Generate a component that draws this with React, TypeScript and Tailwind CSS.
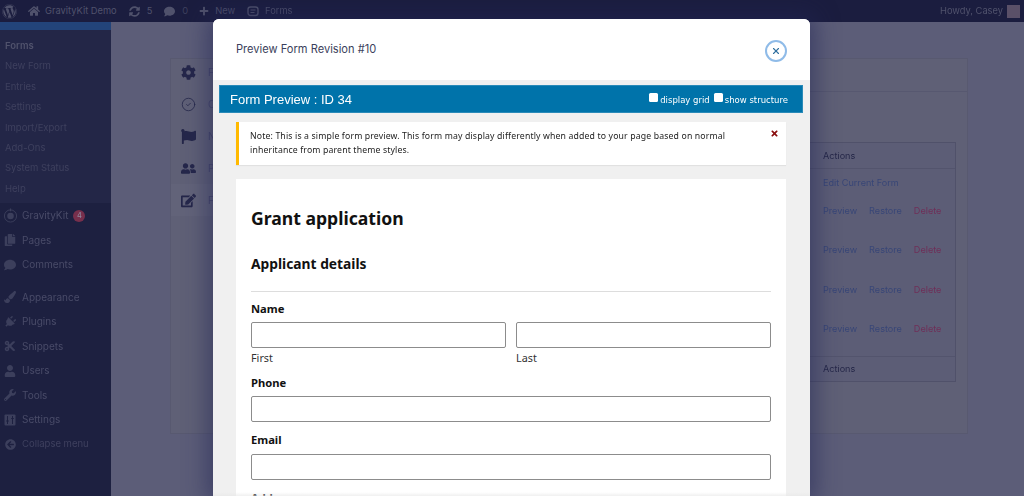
import { FaWordpress, FaHome, FaSyncAlt, FaComment, FaPlus, FaCog, FaFlag, FaUserFriends, FaUser, FaWrench, FaPlug, FaPaintBrush, FaCopy, FaCut, FaArrowCircleLeft, FaEdit, FaTimes } from "react-icons/fa"
import { CircleCheck, X } from "lucide-react"

const subMenu = ["New Form", "Entries", "Settings", "Import/Export", "Add-Ons", "System Status", "Help"]

function GravityIcon({ className }: { className?: string }) {
    return (
        <svg viewBox="0 0 16 16" width="15" height="15" fill="none" stroke="currentColor" className={className}>
            <circle cx="8" cy="8.5" r="6.5" strokeWidth="1" />
            <circle cx="8" cy="8.5" r="3.5" fill="currentColor" stroke="none" />
            <path d="M8 0.5v3" strokeWidth="1.2" />
        </svg>
    )
}

function SettingsIcon({ className }: { className?: string }) {
    return (
        <svg viewBox="0 0 12 12" width="12" height="12" className={className}>
            <rect width="11" height="11" x="0.5" y="0.5" rx="1" fill="currentColor" />
            <path d="M3.5 2v8M2.2 7h2.6M8.5 2v8M7.2 4.5h2.6" stroke="#1d2040" strokeWidth="1" />
        </svg>
    )
}

function FormsIcon({ className }: { className?: string }) {
    return (
        <svg viewBox="0 0 12 12" width="12" height="12" fill="none" stroke="currentColor" className={className}>
            <rect x="1" y="2" width="10" height="8.5" rx="2.5" strokeWidth="1.4" />
            <path d="M3.5 5h5M3.5 7.5h4" strokeWidth="1" />
        </svg>
    )
}

function PlugIcon() {
    return <FaPlug className="rotate-45" />
}

const lowerMenu = [
    { label: "Appearance", icon: FaPaintBrush },
    { label: "Plugins", icon: PlugIcon },
    { label: "Snippets", icon: FaCut },
    { label: "Users", icon: FaUser },
    { label: "Tools", icon: FaWrench },
    { label: "Settings", icon: SettingsIcon },
]

// only the first letter of each tab shows beside the modal
const navItems = [
    { label: "F", icon: FaCog },
    { label: "C", icon: CircleCheck },
    { label: "N", icon: FaFlag },
    { label: "P", icon: FaUserFriends },
    { label: "F", icon: FaEdit },
]

function MenuRow({ label, icon: Icon, badge }: { label: string; icon: any; badge?: string }) {
    return (
        <div className="flex h-[24.5px] items-center pl-[1px]">
            <span className="flex w-[21px] justify-center pr-[3px] text-[12px] text-[#3c3f5c]"><Icon /></span>
            <span className="text-[10px] text-[#494b68]">{label}</span>
            {badge && (
                <span className="ml-[5px] flex h-[12px] w-[12px] items-center justify-center rounded-full bg-[#772f4c] text-[7.5px] text-[#8f8aa0]">
                    {badge}
                </span>
            )}
        </div>
    )
}

function Sidebar() {
    return (
        <aside className="flex w-[111px] shrink-0 flex-col bg-[#1d2040]">
            <div className="h-[8px] bg-[#23447a]" />
            <div className="flex flex-col bg-[#232647] pb-[4px] pl-[5px] pt-[6px]">
                <div className="flex h-[20.4px] items-center text-[9.5px] font-semibold text-[#50526c]">Forms</div>
                {subMenu.map((item) => (
                    <div key={item} className="flex h-[20.4px] items-center text-[9.5px] text-[#3e405e]">{item}</div>
                ))}
            </div>
            <div className="mt-[0.5px]">
                <MenuRow label="GravityKit" icon={GravityIcon} badge="4" />
                <MenuRow label="Pages" icon={FaCopy} />
                <MenuRow label="Comments" icon={FaComment} />
            </div>
            <div className="mt-[8px]">
                {lowerMenu.map((m) => (
                    <MenuRow key={m.label} label={m.label} icon={m.icon} />
                ))}
            </div>
            <div className="flex h-[24px] items-center pl-[1px]">
                <span className="flex w-[21px] justify-center pr-[3px]"><FaArrowCircleLeft className="text-[11px] text-[#3c3f5c]" /></span>
                <span className="text-[9.5px] text-[#3e405e]">Collapse menu</span>
            </div>
        </aside>
    )
}

function TopBar() {
    return (
        <header className="flex h-[22px] shrink-0 items-center justify-between bg-[#1b1d3f] pl-[2px] pr-[4px] text-[9.3px] text-[#50526c]">
            <div className="flex items-center">
                <FaWordpress className="text-[15px]" />
                <FaHome className="ml-[11px] text-[12px]" />
                <span className="ml-[5px]">GravityKit Demo</span>
                <FaSyncAlt className="ml-[12px] text-[11px]" />
                <span className="ml-[7px]">5</span>
                <FaComment className="ml-[12px] text-[11px]" />
                <span className="ml-[7px] text-[#3e405e]">0</span>
                <FaPlus className="ml-[11px] text-[10px]" />
                <span className="ml-[6px]">New</span>
                <FormsIcon className="ml-[12px]" />
                <span className="ml-[6px]">Forms</span>
            </div>
            <div className="flex items-center gap-[4px]">
                <span>Howdy, Casey</span>
                <span className="h-[13px] w-[13px] bg-[#5a5068]" />
            </div>
        </header>
    )
}

function RevisionRow() {
    return (
        <div className="flex h-[39.5px] items-center gap-[12px] pl-[10px] text-[#384677]">
            <span>Preview</span>
            <span>Restore</span>
            <span className="text-[#6f2f58]">Delete</span>
        </div>
    )
}

function Background() {
    return (
        <main className="flex-1 bg-[#5c5d78] pl-[59px] pt-[36px]">
            <div className="flex h-[376px] w-[798px] border border-[#585970] bg-[#5f6076]">
                <nav className="-mt-[2px] flex w-[43px] shrink-0 flex-col">
                    {navItems.map(({ label, icon: Icon }, i) => (
                        <div key={i} className={`flex h-[31.8px] shrink-0 items-center gap-[12px] pl-[10px] text-[10px] text-[#47486a] ${i === 4 ? "bg-[#626379]" : ""}`}>
                            <span className="flex w-[15px] shrink-0 justify-center text-[14px] text-[#25274a]"><Icon size={15} strokeWidth={1.3} /></span>
                            <span>{label}</span>
                        </div>
                    ))}
                </nav>
                <div className="flex-1">
                    <div className="h-[33px] border-b border-[#575870]" />
                    <div className="pl-[100px] pr-[11px] pt-[50px]">
                        <div className="flex h-[240px] flex-col border border-[#50516a] bg-[#5c5d76] text-[9.1px]">
                            <div className="flex h-[26px] shrink-0 items-center border-b border-[#53546d] pl-[508px] text-[#252748]">Actions</div>
                            <div className="ml-[498px] flex-1">
                                <div className="h-[22px] pl-[10px] pt-[7px] leading-[14px] text-[#384677]">Edit Current Form</div>
                                <RevisionRow />
                                <RevisionRow />
                                <RevisionRow />
                                <RevisionRow />
                            </div>
                            <div className="flex h-[25px] shrink-0 items-center border-t border-[#53546d] pl-[508px] text-[#252748]">Actions</div>
                        </div>
                    </div>
                </div>
            </div>
        </main>
    )
}

function Input({ className }: { className?: string }) {
    return <div className={`h-[26px] rounded-[2px] border border-[#8c8c8c] bg-white ${className ?? ""}`} />
}

function Modal() {
    return (
        <div className="absolute left-[213px] top-[19px] flex h-[477px] w-[597px] flex-col overflow-hidden rounded-t-[6px] bg-[#f0f0f0] shadow-[0_0_22px_6px_rgba(35,38,85,0.55)]">
            <div className="flex h-[61px] shrink-0 items-center justify-between bg-white px-[23px]">
                <span className="text-[11.1px] text-[#3c3f5c]">Preview Form Revision #10</span>
                <span className="mt-[2px] flex h-[22px] w-[22px] items-center justify-center rounded-full border-2 border-[#8fbbe8]">
                    <X size={10} strokeWidth={2.6} className="text-[#2f6f9f]" />
                </span>
            </div>
            <div className="ml-[6px] mr-[7px] mt-[5px] flex h-[28px] shrink-0 items-center justify-between border border-[#2a8ab8] bg-[#0073aa] pl-[10px] pr-[14px] text-white">
                <span className="pt-[2px] font-['Liberation_Sans',sans-serif] text-[13px]">Form Preview : ID 34</span>
                <div className="flex items-center gap-[4px] font-['DejaVu_Sans',sans-serif] text-[8.5px]">
                    <label className="flex items-center gap-[2px]"><span className="-mt-[3px] h-[9px] w-[9px] rounded-[1.5px] bg-white" /><span className="pt-[3px]">display grid</span></label>
                    <label className="flex items-center gap-[2px]"><span className="-mt-[3px] h-[9px] w-[9px] rounded-[1.5px] bg-white" /><span className="pt-[3px]">show structure</span></label>
                </div>
            </div>
            <div className="ml-[23px] mr-[24px] mt-[9px] flex h-[43px] shrink-0 justify-between border-l-[3px] border-[#ffb900] bg-white pl-[11px] pr-[7px] pt-[7px] font-['Noto_Sans',sans-serif] text-[8.7px] leading-[14px] tracking-[0.15px] text-[#222] shadow-[0_1px_1px_rgba(0,0,0,0.06)]">
                <p className="w-[490px]">Note: This is a simple form preview. This form may display differently when added to your page based on normal inheritance from parent theme styles.</p>
                <FaTimes className="text-[9px] text-[#8a0f0f]" />
            </div>
            <div className="ml-[23px] mr-[24px] mt-[14px] flex-1 bg-white px-[15px] font-['Noto_Sans',sans-serif] text-[#111]">
                <h1 className="mt-[28px] text-[17.6px] font-bold leading-[22px]">Grant application</h1>
                <h2 className="mt-[26px] text-[13.8px] font-bold leading-[18px]">Applicant details</h2>
                <hr className="mt-[18px] border-[#dddddd]" />
                <div className="mt-[10px] text-[11.2px] font-bold leading-[14px]">Name</div>
                <div className="mt-[6px] flex gap-[10px]">
                    <div className="flex-1">
                        <Input />
                        <div className="mt-[3px] text-[10.8px] leading-[14px] text-[#333]">First</div>
                    </div>
                    <div className="flex-1">
                        <Input />
                        <div className="mt-[3px] text-[10.8px] leading-[14px] text-[#333]">Last</div>
                    </div>
                </div>
                <div className="mt-[11px] text-[11.2px] font-bold leading-[14px]">Phone</div>
                <Input className="mt-[6px]" />
                <div className="mt-[11px] text-[11.2px] font-bold leading-[14px]">Email</div>
                <Input className="mt-[7px]" />
                <div className="mt-[11px] text-[11.2px] font-bold leading-[14px]">Address</div>
            </div>
            <div className="absolute inset-x-0 bottom-0 h-[4px] bg-gradient-to-b from-transparent to-[#e6e6e6]/60" />
        </div>
    )
}

export default function App() {
    return (
        <div className="relative flex h-[496px] w-[1024px] flex-col overflow-hidden font-['Inter',sans-serif] blur-[0.35px]">
            <TopBar />
            <div className="flex flex-1">
                <Sidebar />
                <Background />
            </div>
            <Modal />
        </div>
    )
}
